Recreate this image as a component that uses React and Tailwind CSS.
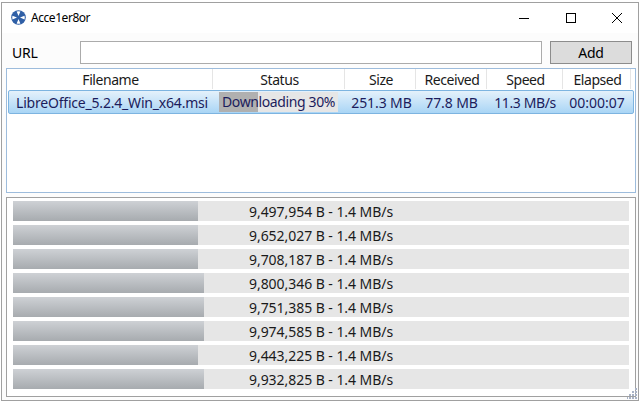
const font = { fontFamily: '"Noto Sans", sans-serif' }

const columns = [
  { name: "Filename", width: "w-[206px]" },
  { name: "Status", width: "w-[132px]" },
  { name: "Size", width: "w-[71px]" },
  { name: "Received", width: "w-[71px]" },
  { name: "Speed", width: "w-[76px]" },
  { name: "Elapsed", width: "w-[68px]" },
]

const connections = [
  { bytes: "9,497,954 B - 1.4 MB/s", fill: 185 },
  { bytes: "9,652,027 B - 1.4 MB/s", fill: 185 },
  { bytes: "9,708,187 B - 1.4 MB/s", fill: 185 },
  { bytes: "9,800,346 B - 1.4 MB/s", fill: 191 },
  { bytes: "9,751,385 B - 1.4 MB/s", fill: 191 },
  { bytes: "9,974,585 B - 1.4 MB/s", fill: 191 },
  { bytes: "9,443,225 B - 1.4 MB/s", fill: 185 },
  { bytes: "9,932,825 B - 1.4 MB/s", fill: 191 },
]

function AppIcon() {
  return (
    <svg width="15" height="15" viewBox="0 0 16 16" className="-mt-[2px]">
      <circle cx="8" cy="8" r="7.8" fill="#2f5fa6" />
      <path d="M8 6.4 L6 1.6 Q8 1 10 1.6 Z M8 9.6 L6 14.4 Q8 15 10 14.4 Z M6.4 8 L1.6 6 Q1 8 1.6 10 Z M9.6 8 L14.4 6 Q15 8 14.4 10 Z" fill="#fff" />
    </svg>
  )
}

function Grip() {
  const dots = [[8, 0], [8, 3], [5, 3], [8, 6], [5, 6], [2, 6], [8, 9], [5, 9], [2, 9], [-1, 9]]
  return (
    <svg className="absolute right-0 bottom-0" width="11" height="12" viewBox="0 0 11 12">
      {dots.map(([x, y]) => (
        <rect key={`${x}-${y}`} x={x} y={y} width="2" height="2" fill="#a9b3c6" />
      ))}
    </svg>
  )
}

function ConnectionBar({ bytes, fill }) {
  return (
    <div className="relative h-5 bg-[#e6e6e6]">
      <div
        className="h-full bg-gradient-to-b from-[#ced1d5] to-[#a7abaf]"
        style={{ width: fill }}
      />
      <div className="absolute inset-0 flex items-center pl-[236px] text-[14px] tracking-[-0.05px] text-[#1a1a1a]">
        {bytes}
      </div>
    </div>
  )
}

export default function App() {
  return (
    <div className="w-[641px] h-[402px] bg-white overflow-hidden" style={font}>
      <div className="relative ml-px mt-[2px] h-[399px] w-[638px] border border-[#a0a0a0] bg-[#fcfcfc] flex flex-col">
        {/* title bar */}
        <div className="flex items-center h-[30px] shrink-0 pl-[9px] bg-white">
          <AppIcon />
          <span className="ml-[5px] text-[12px] tracking-[-0.45px] text-black">Acce1er8or</span>
          <div className="ml-auto flex items-center text-black">
            <svg width="12" height="12" viewBox="0 0 12 12" className="mr-[35px]">
              <path d="M1 6.5 H11" stroke="#000" strokeWidth="1" />
            </svg>
            <svg width="12" height="12" viewBox="0 0 12 12" className="mr-[34px]">
              <rect x="1.5" y="1.5" width="9" height="9" fill="none" stroke="#000" strokeWidth="1" />
            </svg>
            <svg width="12" height="12" viewBox="0 0 12 12" className="mr-[15px]">
              <path d="M1 1 L11 11 M11 1 L1 11" stroke="#000" strokeWidth="1" />
            </svg>
          </div>
        </div>

        {/* url row */}
        <div className="flex items-center h-[24px] mt-[7px] shrink-0 pl-[10px]">
          <span className="w-[68px] text-[14px] tracking-[-0.2px] text-black">URL</span>
          <div className="w-[462px] h-[23px] border border-[#ababab] bg-white" />
          <button className="ml-[8px] w-[82px] h-[23px] border border-[#8c8c8c] bg-[#dcdcdc] text-[14px] tracking-[-0.2px] text-black">
            Add
          </button>
        </div>

        {/* downloads list */}
        <div className="mt-[4px] ml-[4px] w-[630px] h-[125px] shrink-0 border border-[#9dbcdc] bg-white">
          <div className="flex h-[20px] bg-white">
            {columns.map((c) => (
              <div
                key={c.name}
                className={`${c.width} border-r border-[#e5e5e5] pt-px pl-[2px] text-center text-[14px] leading-[20px] tracking-[-0.45px] text-[#1a1a1a]`}
              >
                {c.name}
              </div>
            ))}
          </div>
          <div className="mx-px mt-px flex items-center h-[24px] rounded-[2px] border border-[#7db4e0] bg-gradient-to-b from-[#e4f1fb] to-[#a9d5f5] text-[14px] text-[#1c1c5c]">
            <div className="w-[204px] pl-[7px] whitespace-nowrap tracking-[-0.2px]">LibreOffice_5.2.4_Win_x64.msi</div>
            <div className="w-[132px] pl-[6px]">
              <div className="relative w-[119px] h-[20px] bg-[#e6e6e6] leading-[20px] whitespace-nowrap tracking-[-0.38px]">
                <div className="absolute inset-y-0 left-0 w-[39px] bg-[#b0b0b0]" />
                <span className="relative pl-[3px]">Downloading 30%</span>
              </div>
            </div>
            <div className="w-[71px] pl-[2px] text-center tracking-[-0.1px]">251.3 MB</div>
            <div className="w-[71px] text-center tracking-[-0.1px]">77.8 MB</div>
            <div className="w-[76px] text-center tracking-[-0.4px]">11.3 MB/s</div>
            <div className="w-[68px] text-center">00:00:07</div>
          </div>
        </div>

        {/* connections */}
        <div className="mt-[4px] ml-[4px] w-[630px] h-[200px] shrink-0 border border-[#a0a0a0] bg-white pt-[3px] px-[6px] flex flex-col gap-1">
          {connections.map((c) => (
            <ConnectionBar key={c.bytes} bytes={c.bytes} fill={c.fill} />
          ))}
        </div>
        <Grip />
      </div>
    </div>
  )
}
